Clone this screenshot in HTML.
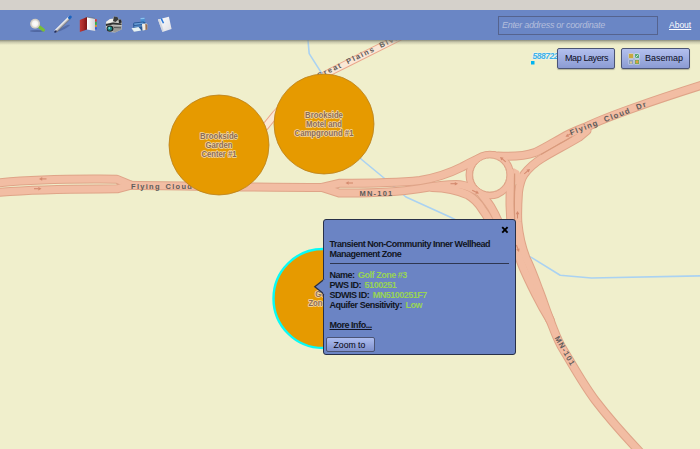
<!DOCTYPE html>
<html><head><meta charset="utf-8">
<style>
html,body{margin:0;padding:0;width:700px;height:449px;overflow:hidden;background:#f0efcc;font-family:"Liberation Sans",sans-serif;}
#map{position:absolute;left:0;top:0;width:700px;height:449px;}
#topgray{position:absolute;left:0;top:0;width:700px;height:10px;background:#d5d1cb;}
#bar{position:absolute;left:0;top:10px;width:700px;height:30px;background:#6a86c5;}
#icons{position:absolute;left:0;top:10px;}
#shadow{position:absolute;left:0;top:40px;width:700px;height:5px;background:linear-gradient(rgba(110,112,100,.78),rgba(150,150,130,.45) 40%,rgba(240,239,204,0));}
#search{position:absolute;left:498px;top:15.5px;width:158px;height:17.5px;border:1px solid #55638e;box-sizing:content-box;}
#search span{position:absolute;left:3px;top:3.5px;font-size:9px;font-style:italic;color:#b4bedc;white-space:nowrap;letter-spacing:-0.3px;}
#about{position:absolute;left:669px;top:19.5px;font-size:8.5px;color:#fff;text-decoration:underline;}
.btn{position:absolute;top:48px;height:18.5px;border:1px solid #4b5475;border-radius:2px;background:linear-gradient(#b3c0ee,#8b9bd3);box-shadow:0 1px 1px rgba(0,0,0,.25);font-size:9px;color:#0c0c1c;}
.btn span{position:absolute;top:4px;white-space:nowrap;}
#popup{position:absolute;left:323px;top:219px;width:191px;height:134px;background:#6b84c4;border:1.5px solid #283048;border-radius:3px;box-sizing:content-box;}
#popup .t{position:absolute;left:5.5px;font-size:9px;line-height:10px;font-weight:bold;color:#111522;white-space:nowrap;letter-spacing:-0.48px;}
#popup .v{color:#98d455;font-weight:bold;margin-left:-0.6px;}
#close{position:absolute;left:177px;top:6px;}
#sep{position:absolute;left:6px;top:42.5px;width:179px;height:1.5px;background:#2e3650;}
#zoomto{position:absolute;left:1.5px;top:116.5px;width:47px;height:13px;border:1px solid #4b5475;border-radius:2px;background:linear-gradient(#adbdf0,#7f90cc);font-size:8.7px;color:#05050f;}
#zoomto span{position:absolute;left:7px;top:2px;}
#ptr{position:absolute;left:310px;top:276px;}
</style></head><body>
<svg id="map" width="700" height="449" viewBox="0 0 700 449">
<defs>
 <g id="roads" fill="none" stroke-linecap="round" stroke-linejoin="round">
  <path d="M-5,183.2 C20,180.5 50,178.8 100,179 L117,179.3 L131,185.2"/>
  <path d="M-5,192.6 C20,190.5 50,189.2 100,189 L117,188.8 L131,185.2"/>
  <path d="M125,185.2 C190,185.8 250,187.4 326,187.4"/>
  <path d="M322,187.4 L339,183.3 C370,183.3 395,183.2 420,180.5 C440,177.2 452,172 462,167 C470,162.5 478,158 486,156 L494,155.5"/>
  <path d="M322,187.4 L339,193 C370,193.3 395,192.5 420,188.6 C438,185.5 452,184.2 460,184.7 C466,185.5 471,187.5 477,191"/>
  <path d="M432,187.5 C445,187.8 458,190.5 468,195 C475,199 479,204 482,209 C485,213 487,216 489,220 L510,245"/>
  <path d="M478,190 C483,196 487,201 491,207 C494,212 496,216 498.5,222 L508,240"/>
  <path d="M510.3,172 C510.3,185 510,195 510,205 C510,215 511,225 513,235 C515,245 518,255 522,265 C526,275 531,285 536,295 C540,303 545,312 550,320"/>
  <path d="M587,130.5 L579,137.2 C566,145 552,152 542.5,158 C535,162.5 528,169 524,174.5 C521,179 519.5,185 518.5,192 C517.8,202 517.3,212 517.8,222 C519,235 522,248 526,258 C531,268 535,279 539,290 C543,300 546,310 550,320"/>
  <path d="M594,124 C584,127.5 576,130 566,135.5 C555,141.5 545,148 535,152.5 C525,156 515,157 498,156"/>
  <path d="M706,83.8 C680,92 660,98.5 635,107.4 C615,114.5 600,120 588,126"/>
  <path d="M537,292 C541,301 546,311 550,320 C554,330 558,342 563.5,350 C572,364 583,384 595,400 C608,417 622,433 640,452"/>
 </g>
 <g id="arrows" fill="#d48a6e" stroke="#d48a6e">
  <g transform="translate(39,178.9) rotate(180)"><path d="M0,0 L-3.2,-1.8 L-3.2,1.8 Z" stroke="none"/><path d="M-3,0 L-7.5,0" stroke-width="1.1" fill="none"/></g>
  <g transform="translate(41.5,188.7) rotate(0)"><path d="M0,0 L-3.2,-1.8 L-3.2,1.8 Z" stroke="none"/><path d="M-3,0 L-7.5,0" stroke-width="1.1" fill="none"/></g>
  <g transform="translate(345.5,183) rotate(180)"><path d="M0,0 L-3.2,-1.8 L-3.2,1.8 Z" stroke="none"/><path d="M-3,0 L-7.5,0" stroke-width="1.1" fill="none"/></g>
  <g transform="translate(458,183.7) rotate(0)"><path d="M0,0 L-3.2,-1.8 L-3.2,1.8 Z" stroke="none"/><path d="M-3,0 L-7.5,0" stroke-width="1.1" fill="none"/></g>
  <g transform="translate(479,193.5) rotate(25)"><path d="M0,0 L-3.2,-1.8 L-3.2,1.8 Z" stroke="none"/><path d="M-3,0 L-7.5,0" stroke-width="1.1" fill="none"/></g>
  <g transform="translate(500,157) rotate(-140)"><path d="M0,0 L-3.2,-1.8 L-3.2,1.8 Z" stroke="none"/><path d="M-3,0 L-7.5,0" stroke-width="1.1" fill="none"/></g>
  <g transform="translate(530,169) rotate(-40)"><path d="M0,0 L-3.2,-1.8 L-3.2,1.8 Z" stroke="none"/><path d="M-3,0 L-7.5,0" stroke-width="1.1" fill="none"/></g>
  <g transform="translate(565.5,136.8) rotate(150)"><path d="M0,0 L-3.2,-1.8 L-3.2,1.8 Z" stroke="none"/><path d="M-3,0 L-7.5,0" stroke-width="1.1" fill="none"/></g>
  <g transform="translate(517.5,211) rotate(-90)"><path d="M0,0 L-3.2,-1.8 L-3.2,1.8 Z" stroke="none"/><path d="M-3,0 L-7.5,0" stroke-width="1.1" fill="none"/></g>
  <g transform="translate(519,252) rotate(70)"><path d="M0,0 L-3.2,-1.8 L-3.2,1.8 Z" stroke="none"/><path d="M-3,0 L-7.5,0" stroke-width="1.1" fill="none"/></g>
 </g>
</defs>
<!-- Great Plains Blvd minor road -->
<path id="gp" d="M412,31 C392,41 360,57 330,72 C306,85.5 288,100 275.5,114 C265.5,126 253,142 240,161" fill="none" stroke="#eba48a" stroke-width="7.5" stroke-linecap="round"/>
<path d="M412,31 C392,41 360,57 330,72 C306,85.5 288,100 275.5,114 C265.5,126 253,142 240,161" fill="none" stroke="#fae7d5" stroke-width="5.8" stroke-linecap="round"/>
<!-- streams -->
<polyline points="307.8,38 309.2,53.6 321.7,73.4 361,159 384,178 406,197 450,217 531.7,257.6 560.2,275.3 591.4,278 705,275.8" fill="none" stroke="#aad2f2" stroke-width="1.6" stroke-linejoin="round"/>
<!-- road casing -->
<use href="#roads" stroke="#dfa488" stroke-width="9"/>
<circle cx="489.8" cy="175" r="20.5" fill="none" stroke="#dfa488" stroke-width="7.5"/>
<use href="#roads" stroke="#f2bda3" stroke-width="7"/>
<circle cx="489.8" cy="175" r="20.5" fill="none" stroke="#f2bda3" stroke-width="5.5"/>
<circle cx="489.8" cy="175" r="17.1" fill="#f0efcc" stroke="#dfa488" stroke-width="1"/>
<path d="M513.5,168 L519,171 L521,176 L519.5,184 L515.5,184 L513.5,176 Z" fill="#f2bda3"/>
<path d="M514.6,173.5 L514.6,190 C514.2,205 514.2,215 515,226 M572,136.8 C560,143.5 550,149 541,154.5" stroke="#d99a7c" stroke-width="1.2" fill="none"/>
<use href="#arrows"/>
<!-- road labels -->
<g font-size="7.5" font-weight="bold" fill="#5e5c5a">
<text x="131" y="188.6" letter-spacing="1.3" word-spacing="1.2">Flying Cloud</text>
<text x="359.5" y="195.7" letter-spacing="1.2">MN-101</text>
<text transform="translate(571,135.4) rotate(-21)" font-size="7.8" letter-spacing="1.2" word-spacing="3">Flying Cloud Dr</text>
<text transform="translate(554.5,338) rotate(60)" letter-spacing="1.1">MN-101</text>
<text transform="translate(318.5,78.5) rotate(-26)" letter-spacing="1.5" word-spacing="2">Great Plains Blvd</text>
</g>
<!-- circles -->
<circle cx="219" cy="145" r="50" fill="#e69a00" stroke="#b98220" stroke-width="0.8"/>
<circle cx="324" cy="124" r="50" fill="#e69a00" stroke="#b98220" stroke-width="0.8"/>
<circle cx="323" cy="298.5" r="49.5" fill="#e69a00" stroke="#08fbf6" stroke-width="2.4"/>
<g font-size="8.6" font-weight="bold" fill="#8e6c52" text-anchor="middle" stroke="#f3d9a8" stroke-width="1.5" paint-order="stroke" stroke-linejoin="round">
 <text transform="translate(219,138.6) scale(0.9,1)">Brookside</text>
 <text transform="translate(219,147.6) scale(0.9,1)">Garden</text>
 <text transform="translate(219,156.6) scale(0.9,1)">Center #1</text>
 <text transform="translate(324,117.6) scale(0.9,1)">Brookside</text>
 <text transform="translate(324,126.6) scale(0.9,1)">Motel and</text>
 <text transform="translate(324,135.6) scale(0.9,1)">Campground #1</text>
 <text transform="translate(323,296.6) scale(0.9,1)">Golf</text>
 <text transform="translate(323,305.6) scale(0.9,1)">Zone #3</text>
</g>
<!-- coordinate marker -->
<rect x="531" y="61" width="3.5" height="3.5" fill="#00b4f0"/>
<text x="532.5" y="59.3" font-size="8.5" font-style="italic" font-weight="bold" fill="#3fb2e8" stroke="#eef6f4" stroke-width="0.8" paint-order="stroke" letter-spacing="-0.5">588722</text>
</svg>

<div id="topgray"></div>
<div id="bar"></div>
<svg id="icons" width="180" height="30" viewBox="0 10 180 30">
 <defs>
  <radialGradient id="lens" cx="0.5" cy="0.5" r="0.5"><stop offset="0" stop-color="#ffffff"/><stop offset="0.55" stop-color="#f6f4f0"/><stop offset="0.8" stop-color="#d6d2ca"/><stop offset="1" stop-color="#c4c0b6"/></radialGradient>
  <linearGradient id="pen" gradientUnits="userSpaceOnUse" x1="61.5" y1="23" x2="64.1" y2="25.7"><stop offset="0" stop-color="#ffffff"/><stop offset="0.35" stop-color="#e4e4e4"/><stop offset="0.7" stop-color="#a0a0a6"/><stop offset="1" stop-color="#5a5a64"/></linearGradient>
  <linearGradient id="red" x1="0" y1="0" x2="1" y2="0"><stop offset="0" stop-color="#c03a36"/><stop offset="0.5" stop-color="#a82a28"/><stop offset="1" stop-color="#7c1414"/></linearGradient>
  <linearGradient id="pages" x1="0" y1="0" x2="1" y2="0"><stop offset="0" stop-color="#ffffff"/><stop offset="1" stop-color="#d0d2d6"/></linearGradient>
  <linearGradient id="cam" x1="0" y1="0" x2="1" y2="1"><stop offset="0" stop-color="#e8e8e8"/><stop offset="0.5" stop-color="#a8a8a8"/><stop offset="1" stop-color="#505050"/></linearGradient>
  <linearGradient id="prn" x1="0" y1="0" x2="0" y2="1"><stop offset="0" stop-color="#5c9ad8"/><stop offset="1" stop-color="#1c4a86"/></linearGradient>
  <linearGradient id="doc" x1="0" y1="0" x2="1" y2="1"><stop offset="0" stop-color="#ffffff"/><stop offset="1" stop-color="#dcdde4"/></linearGradient>
 </defs>
 <!-- magnifier -->
 <ellipse cx="37" cy="31" rx="7" ry="1.1" fill="#34457a" opacity="0.45"/>
 <line x1="39.2" y1="26.8" x2="43.4" y2="30" stroke="#78c034" stroke-width="3.3" stroke-linecap="round"/>
 <circle cx="35.1" cy="23.7" r="4.9" fill="url(#lens)"/><circle cx="35.1" cy="23.7" r="4.3" fill="none" stroke="#d4d0c8" stroke-width="0.9" opacity="0.8"/>
 <!-- pencil -->
 <ellipse cx="64" cy="28" rx="6.5" ry="1.2" transform="rotate(-28 64 28)" fill="#34457a" opacity="0.4"/>
 <line x1="56.2" y1="30.8" x2="69.4" y2="17.9" stroke="url(#pen)" stroke-width="3.2" stroke-linecap="round"/>
 <line x1="69.5" y1="17.8" x2="70.3" y2="17" stroke="#1a64c0" stroke-width="3" stroke-linecap="round"/>
 <line x1="55.1" y1="31.9" x2="55.9" y2="31.1" stroke="#1e2a5c" stroke-width="1.8" stroke-linecap="round"/>
 <!-- book -->
 <polygon points="79.8,19.9 87,17.1 87,29.5 79.8,31.9" fill="url(#red)"/>
 <polygon points="87,17.1 95.2,18.5 95.2,30.9 87,29.5" fill="url(#pages)"/>
 <line x1="87" y1="17.1" x2="95.2" y2="18.5" stroke="#505860" stroke-width="0.6"/>
 <rect x="95" y="19.2" width="1.8" height="2.5" fill="#d83a30"/>
 <rect x="95" y="21.9" width="1.8" height="2.9" fill="#38b040"/>
 <rect x="95" y="25" width="1.8" height="2" fill="#e08a30"/>
 <rect x="95" y="27.2" width="1.8" height="2.3" fill="#3a58d0"/>
 <!-- camera -->
 <path d="M106,22 L110,19 L113,18.5 L114,16.5 L117.5,17 L118.5,19 L121,19.5 L122,23 L121.5,29.5 L115,32.5 L109,32 L105.7,29 Z" fill="#c8c8c4"/>
 <path d="M106,22 L110,19 L114,19 L113,21.5 L107,24 Z" fill="#eeeeea"/>
 <path d="M114,16.5 L117.5,17 L118.5,19.5 L115.5,22 L113,21 Z" fill="#3a3c3c"/>
 <path d="M118.5,19.5 L121,19.5 L121.8,22.5 L119,23.5 Z" fill="#2a2c2c"/>
 <path d="M105.8,24 L113,22.5 L121.5,23.5 L121.5,25 L113,24.5 L106,26 Z" fill="#303232"/>
 <path d="M113,25.5 L121.5,26 L121.5,29.5 L115,32.5 L112,31 Z" fill="#9a9a96"/>
 <path d="M114,27.5 L121,27.8" stroke="#404242" stroke-width="0.8"/>
 <ellipse cx="110" cy="28.6" rx="3.4" ry="3.2" fill="#202426"/>
 <ellipse cx="109.8" cy="28.6" rx="2.3" ry="2.2" fill="#1a8a88"/>
 <circle cx="109.3" cy="28" r="0.9" fill="#8ee0d8"/>
 <!-- printer -->
 <path d="M140.5,18 L144.5,17.8 L145.3,22.5 L140.8,23 Z" fill="#4a90d0"/>
 <path d="M140.5,18 L144.5,17.8 L144.6,19 L140.6,19.3 Z" fill="#8cc0ec"/>
 <path d="M134,22.5 L143.5,21.5 L147,23.5 L147.3,29.5 L142,30.8 L133.5,28.5 L133,24 Z" fill="#2a5a98"/>
 <path d="M134,23.5 L143,22.5 L144,23.8 L134.5,25 Z" fill="#6aa0d8"/>
 <path d="M134,26 L143.5,25 L144,26.3 L134.5,27.3 Z" fill="#5a90c8"/>
 <path d="M142,24 L146.5,23.3 L147.3,24.5 L147.3,29.5 L142.5,30.8 Z" fill="#f0ece4"/>
 <path d="M145.3,23.8 L147.3,24.5 L147.3,29.5 L145.5,30.2 Z" fill="#9a7050"/>
 <path d="M131.5,28.3 L138.5,27 L141.5,30.6 L134,31.8 Z" fill="#e6f2f4"/>
 <path d="M131.5,28.3 L134,31.8 L134.5,32 L132,29 Z" fill="#b8a080"/>
 <!-- document -->
 <polygon points="157.9,19.5 168.9,16.8 171.6,29.1 162.4,31.9" fill="url(#doc)"/>
 <polygon points="157.9,19.5 160,19 163.5,30 162.4,31.9" fill="#c8ccd6" opacity="0.7"/>
 <polygon points="160.3,18.6 162,18.2 164.2,22.9 162.8,23.5" fill="#2a78d8"/>
</svg>
<div id="shadow"></div>

<div id="search"><span>Enter address or coordinate</span></div>
<div id="about">About</div>

<div class="btn" style="left:557px;width:56px;"><span style="left:7px;letter-spacing:-0.4px">Map Layers</span></div>
<div class="btn" style="left:621px;width:67px;">
 <svg style="position:absolute;left:6px;top:3.5px" width="12" height="12">
  <rect x="0.5" y="0.5" width="5" height="5" fill="#e8e0a8"/><rect x="1" y="1" width="4" height="4" fill="#c8a840"/>
  <rect x="6.5" y="0.5" width="5" height="5" fill="#d8e8e8"/><rect x="7" y="1" width="4" height="4" fill="#58a878"/><path d="M7.5,4.5 L10.5,1.5" stroke="#e8f0f0" stroke-width="0.8"/>
  <rect x="0.5" y="6.5" width="5" height="5" fill="#d0d8e8"/><rect x="1" y="7" width="4" height="4" fill="#8aa0b8"/><rect x="2" y="8.5" width="2" height="2" fill="#d8c890"/>
  <rect x="6.5" y="6.5" width="5" height="5" fill="#d8e0c8"/><rect x="7" y="7" width="4" height="4" fill="#70a858"/><circle cx="9" cy="9" r="1.4" fill="#e0a040"/>
 </svg>
 <span style="left:23px">Basemap</span></div>

<div id="popup">
 <svg id="close" width="8" height="8"><path d="M1.2,1.2 L6.6,6.6 M6.6,1.2 L1.2,6.6" stroke="#000" stroke-width="1.9"/></svg>
 <div class="t" style="top:18.8px">Transient Non-Community Inner Wellhead</div>
 <div class="t" style="top:28.6px">Management Zone</div>
 <div id="sep"></div>
 <div class="t" style="top:49.8px">Name:&nbsp; <span class="v">Golf Zone #3</span></div>
 <div class="t" style="top:59.8px">PWS ID:&nbsp; <span class="v">5100251</span></div>
 <div class="t" style="top:69.8px">SDWIS ID:&nbsp; <span class="v">MN5100251F7</span></div>
 <div class="t" style="top:79.8px">Aquifer Sensitivity:&nbsp; <span class="v">Low</span></div>
 <div class="t" style="top:99.8px;text-decoration:underline">More Info...</div>
 <div id="zoomto"><span>Zoom to</span></div>
</div>
<svg id="ptr" width="16" height="22"><polygon points="15,3.3 4.8,10.8 15,18.2" fill="#6b84c4"/><polyline points="14.2,3.3 4.8,10.8 14.2,18.2" fill="none" stroke="#283048" stroke-width="1.3" stroke-linejoin="miter"/><rect x="13.2" y="3.6" width="4" height="14.3" fill="#6b84c4"/></svg>
</body></html>
